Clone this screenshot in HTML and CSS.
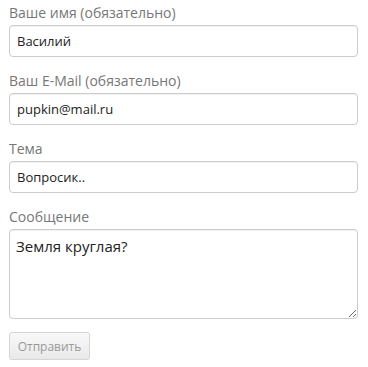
FILE: index.html
```html
<!DOCTYPE html>
<html lang="ru">
<head>
<meta charset="utf-8">
<link rel="stylesheet" href="styles.css">
</head>
<body>
<form class="form">
  <div class="field">
    <label class="label" for="name">Ваше имя (обязательно)</label>
    <input class="input" id="name" type="text" value="Василий">
  </div>
  <div class="field">
    <label class="label" for="email">Ваш E-Mail (обязательно)</label>
    <input class="input" id="email" type="text" value="pupkin@mail.ru">
  </div>
  <div class="field">
    <label class="label" for="subject">Тема</label>
    <input class="input" id="subject" type="text" value="Вопросик..">
  </div>
  <div class="field field-last">
    <label class="label" for="msg">Сообщение</label>
    <textarea class="input textarea" id="msg">Земля круглая?</textarea>
  </div>
  <button class="btn" type="button">Отправить</button>
</form>
</body>
</html>
```
FILE: styles.css
```css
html, body {
  margin: 0;
  padding: 0;
  background: #fff;
}
.form {
  padding: 3px 10px 0 9px;
  font-family: "Open Sans", sans-serif;
}
.field {
  display: flex;
  flex-direction: column;
  margin-bottom: 14px;
}
.field-last {
  margin-bottom: 13px;
}
.label {
  font-size: 14px;
  line-height: 20px;
  color: #777;
  margin-bottom: 2px;
}
.input {
  box-sizing: border-box;
  width: 100%;
  height: 32px;
  margin: 0;
  padding: 4px 7px;
  border: 1px solid #ccc;
  border-radius: 4px;
  box-shadow: inset 0 1px 1px rgba(0,0,0,0.06);
  font-family: "Open Sans", sans-serif;
  font-size: 13px;
  color: #222;
  background: #fff;
}
.textarea {
  display: block;
  height: 90px;
  padding: 6px 6px;
  font-size: 15px;
  line-height: 20px;
  resize: both;
}
.btn {
  box-sizing: border-box;
  width: 81px;
  height: 28px;
  padding: 0;
  border: 1px solid #d6d6d6;
  border-radius: 3px;
  background: linear-gradient(#f9f9f9, #e9e9e9);
  color: #999;
  font-family: "Open Sans", sans-serif;
  font-size: 12px;
  box-shadow: 0 1px 1px rgba(0,0,0,0.05);
}
```
